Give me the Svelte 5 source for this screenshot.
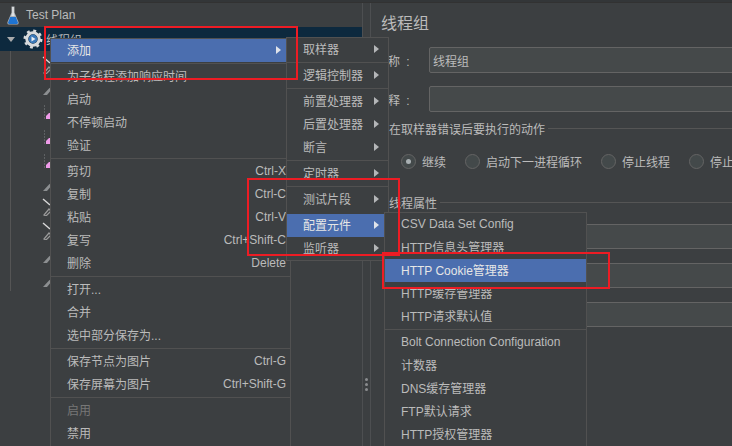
<script lang="ts">
  type Item = { label?: string; key?: string; arrow?: boolean; active?: boolean; muted?: boolean; sep?: boolean; blank?: boolean };

  const mainMenu: Item[] = [
    { label: '添加', arrow: true, active: true },
    { sep: true },
    { label: '为子线程添加响应时间' },
    { label: '启动' },
    { label: '不停顿启动' },
    { label: '验证' },
    { sep: true },
    { label: '剪切', key: 'Ctrl-X' },
    { label: '复制', key: 'Ctrl-C' },
    { label: '粘贴', key: 'Ctrl-V' },
    { label: '复写', key: 'Ctrl+Shift-C' },
    { label: '删除', key: 'Delete' },
    { sep: true },
    { label: '打开...' },
    { label: '合并' },
    { label: '选中部分保存为...' },
    { sep: true },
    { label: '保存节点为图片', key: 'Ctrl-G' },
    { label: '保存屏幕为图片', key: 'Ctrl+Shift-G' },
    { sep: true },
    { label: '启用', muted: true },
    { label: '禁用' }
  ];

  const addMenu: Item[] = [
    { label: '取样器', arrow: true },
    { sep: true },
    { label: '逻辑控制器', arrow: true },
    { sep: true },
    { label: '前置处理器', arrow: true },
    { label: '后置处理器', arrow: true },
    { label: '断言', arrow: true },
    { sep: true },
    { label: '定时器', arrow: true },
    { sep: true },
    { label: '测试片段', arrow: true },
    { sep: true, blank: true },
    { label: '配置元件', arrow: true, active: true },
    { label: '监听器', arrow: true }
  ];

  const configMenu: Item[] = [
    { label: 'CSV Data Set Config' },
    { label: 'HTTP信息头管理器' },
    { label: 'HTTP Cookie管理器', active: true },
    { label: 'HTTP缓存管理器' },
    { label: 'HTTP请求默认值' },
    { sep: true },
    { label: 'Bolt Connection Configuration' },
    { label: '计数器' },
    { label: 'DNS缓存管理器' },
    { label: 'FTP默认请求' },
    { label: 'HTTP授权管理器' }
  ];

  // tops are page y of each icon box, the tree itself starts at y = 3
  const treeIcons = [
    { top: 54, kind: 'clip' },
    { top: 81, kind: 'pencil' },
    { top: 105, kind: 'pink' },
    { top: 130, kind: 'pink' },
    { top: 154, kind: 'pink' },
    { top: 177, kind: 'pencil' },
    { top: 196, kind: 'clip' },
    { top: 220, kind: 'clip' },
    { top: 249, kind: 'pencil' },
    { top: 273, kind: 'pencil' }
  ];

  const radios = [
    { label: '继续', checked: true },
    { label: '启动下一进程循环' },
    { label: '停止线程' },
    { label: '停止测试' }
  ];
</script>

{#snippet menu(items: Item[], cls: string)}
  <div class="menu {cls}">
    {#each items as item}
      {#if item.sep}
        <div class="sep" class:blank={item.blank}></div>
      {:else}
        <div class="item" class:active={item.active} class:muted={item.muted}>
          <span class="label">{item.label}</span>
          {#if item.key}<span class="key">{item.key}</span>{/if}
          {#if item.arrow}<span class="arrow"></span>{/if}
        </div>
      {/if}
    {/each}
  </div>
{/snippet}

<div class="screen">
  <div class="topline"></div>
  <div class="panes">
    <aside class="tree">
      <div class="row">
        <svg class="flask" viewBox="0 0 12 19" width="12" height="19">
          <path d="M4.500 0.500h3v6l4 9.500q.6 2.500-1.500 2.500H2q-2.100 0-1.500-2.500l4-9.500z" fill="#aeb2b6"/>
          <path d="M5.200 1h1.600v6l1 3H4.200l1-3z" fill="#dfe1e3"/>
          <path d="M3.200 11h5.600l2 5.200q.3 1.800-1 1.800H2.200q-1.300 0-1-1.800z" fill="#1f74d2"/>
        </svg>
        <span>Test Plan</span>
      </div>
      <div class="row selected">
        <span class="caret"></span>
        <svg class="gear" viewBox="0 0 20 20" width="20" height="20">
          <circle cx="10" cy="10" r="6.200" fill="none" stroke="#d8dadc" stroke-width="3"/>
          <circle cx="10" cy="10" r="8" fill="none" stroke="#d8dadc" stroke-width="3" stroke-dasharray="2.800 3.480"/>
          <circle cx="10" cy="10" r="4.400" fill="#3a78b8"/>
          <path d="M8.500 7.500l4 2.500-4 2.500z" fill="#e8eef5"/>
        </svg>
        <span class="node">线程组</span>
      </div>
      <div class="guide"></div>
      {#each treeIcons as icon}
        <svg class="tree-icon" viewBox="0 0 12 20" width="12" height="20" style="top: {icon.top - 3}px">
          {#if icon.kind === 'pencil'}
            <path d="M2 14L8 7.500 10 6l1 2-5 6z" fill="#8c8f91"/>
          {:else if icon.kind === 'pink'}
            <path d="M3.500 0v14" stroke="#5e6163" stroke-dasharray="2 1" fill="none"/>
            <path d="M5 14V11l3-3h4v6z" fill="#ee9be8"/>
          {:else}
            <path d="M2 3l7 6" stroke="#d8d8d8" stroke-width="1.400" fill="none"/>
            <path d="M3 19l5-6 2 2-5 5z" fill="none" stroke="#9a9a9a" stroke-width="1.200"/>
          {/if}
        </svg>
      {/each}
    </aside>

    <div class="splitter">
      <span></span><span></span><span></span>
    </div>

    <main class="detail">
      <h1>线程组</h1>
      <div class="field"><label for="name">名称 :</label><input id="name" value="线程组" /></div>
      <div class="field"><label for="note">注释 :</label><input id="note" /></div>

      <div class="group-title"><span>在取样器错误后要执行的动作</span><i></i></div>
      <div class="radios">
        {#each radios as radio}
          <div class="radio">
            <span class="dot" class:checked={radio.checked}></span>{radio.label}
          </div>
        {/each}
      </div>

      <div class="group-title props"><span>线程属性</span><i></i></div>
      <div class="bars">
        <div class="bar"></div>
        <div class="bar"></div>
        <div class="bar"></div>
      </div>
    </main>
  </div>

  {@render menu(mainMenu, 'main-menu')}
  {@render menu(addMenu, 'add-menu')}
  {@render menu(configMenu, 'config-menu')}

  <div class="mark mark-add"></div>
  <div class="mark mark-config"></div>
  <div class="mark mark-cookie"></div>
</div>

<style>
  :global(body) {
    margin: 0;
    background: #3c3f41;
  }

  .screen {
    position: relative;
    width: 732px;
    height: 446px;
    overflow: hidden;
    background: #3c3f41;
    color: #bbbbbb;
    font-family: "Liberation Sans", "Noto Sans CJK SC", sans-serif;
    font-size: 12px;
  }

  .topline {
    height: 2px;
    background: #333638;
    border-bottom: 1px solid #323232;
  }

  .panes {
    display: flex;
    height: 443px;
  }

  .tree {
    position: relative;
    width: 362px;
    flex-shrink: 0;
  }

  .row {
    display: flex;
    align-items: center;
    height: 24px;
  }

  .flask {
    margin-left: 7px;
    margin-right: 7px;
  }

  .selected {
    background: #0d293e;
  }

  .caret {
    width: 0;
    height: 0;
    margin-left: 7px;
    margin-right: 8px;
    border-left: 4px solid transparent;
    border-right: 4px solid transparent;
    border-top: 5px solid #a9abad;
  }

  .node {
    margin-left: 3px;
  }

  .guide {
    position: absolute;
    left: 10px;
    top: 48px;
    width: 1px;
    height: 240px;
    background: #555555;
  }

  .tree-icon {
    position: absolute;
    left: 41px;
  }

  .splitter {
    width: 9px;
    flex-shrink: 0;
    display: flex;
    flex-direction: column;
    align-items: center;
    justify-content: flex-start;
    gap: 2px;
    padding-top: 375px;
    box-sizing: border-box;
    border-left: 1px solid #4d4f51;
    border-right: 1px solid #4d4f51;
  }

  .splitter span {
    width: 3px;
    height: 3px;
    border-radius: 50%;
    background: #8a8c8e;
  }

  .detail {
    flex: 1;
    min-width: 0;
    position: relative;
    padding-left: 5px;
  }

  h1 {
    margin: 9px 0 0 5px;
    height: 23px;
    font-size: 16px;
    line-height: 23px;
    font-weight: 400;
  }

  .field {
    display: flex;
    align-items: center;
    height: 26px;
    margin-top: 12px;
  }

  .field + .field {
    margin-top: 13px;
  }

  .field label {
    width: 53px;
    flex-shrink: 0;
    word-spacing: 3px;
  }

  input {
    flex: 1;
    min-width: 0;
    height: 26px;
    margin-right: -20px;
    box-sizing: border-box;
    padding: 0 3px;
    border: 1px solid #646464;
    border-radius: 2px;
    background: #45494a;
    color: #bbbbbb;
    font: inherit;
  }

  .group-title {
    display: flex;
    align-items: center;
    gap: 3px;
    height: 16px;
    margin-top: 8px;
    margin-left: 13px;
  }

  .group-title span {
    white-space: nowrap;
  }

  .group-title i {
    flex: 1;
    height: 1px;
    background: #555555;
  }

  .radios {
    display: flex;
    align-items: center;
    height: 16px;
    margin-top: 17px;
    margin-left: 25px;
    white-space: nowrap;
  }

  .radio {
    display: flex;
    align-items: center;
    gap: 6px;
    margin-right: 19px;
  }

  .dot {
    width: 15px;
    height: 15px;
    box-sizing: border-box;
    border: 1px solid #646464;
    border-radius: 50%;
    background: #43494a;
    display: flex;
    align-items: center;
    justify-content: center;
  }

  .dot.checked::after {
    content: "";
    width: 5px;
    height: 5px;
    border-radius: 50%;
    background: #a9b0b3;
  }

  .props {
    margin-top: 25px;
  }

  .bars {
    display: flex;
    flex-direction: column;
    gap: 14px;
    margin-top: 14px;
    margin-left: 200px;
  }

  .bar {
    height: 25px;
    background: #45494a;
    border-top: 1px solid #646464;
    border-bottom: 1px solid #646464;
    box-sizing: border-box;
  }

  .menu {
    position: absolute;
    box-sizing: border-box;
    background: #3c3f41;
    border: 1px solid #515151;
  }

  .main-menu {
    left: 50px;
    top: 38px;
    width: 241px;
    padding-bottom: 12px;
  }

  .add-menu {
    left: 286px;
    top: 37px;
    width: 103px;
    height: 224px;
  }

  .config-menu {
    left: 384px;
    top: 212px;
    width: 203px;
    padding-bottom: 12px;
  }

  .item {
    position: relative;
    display: flex;
    align-items: center;
    justify-content: space-between;
    height: 23px;
    box-sizing: border-box;
    padding: 0 4px 2px 16px;
    white-space: nowrap;
  }

  .item.active {
    background: #4b6eaf;
    color: #e6e6e6;
  }

  .item.muted {
    color: #777777;
  }

  .sep {
    height: 3px;
    display: flex;
    align-items: center;
  }

  .sep::before {
    content: "";
    flex: 1;
    height: 1px;
    background: #515151;
  }

  .sep.blank::before {
    display: none;
  }

  .arrow {
    position: absolute;
    right: 9px;
    top: 7px;
    border-top: 4px solid transparent;
    border-bottom: 4px solid transparent;
    border-left: 5px solid #b4b6b8;
  }

  .active .arrow {
    border-left-color: #dfe3ea;
  }

  .mark {
    position: absolute;
    box-sizing: border-box;
    border: 2px solid #ed1c24;
    pointer-events: none;
  }

  .mark-add {
    left: 44px;
    top: 26px;
    width: 254px;
    height: 54px;
  }

  .mark-config {
    left: 247px;
    top: 178px;
    width: 153px;
    height: 78px;
  }

  .mark-cookie {
    left: 382px;
    top: 252px;
    width: 228px;
    height: 37px;
  }
</style>
